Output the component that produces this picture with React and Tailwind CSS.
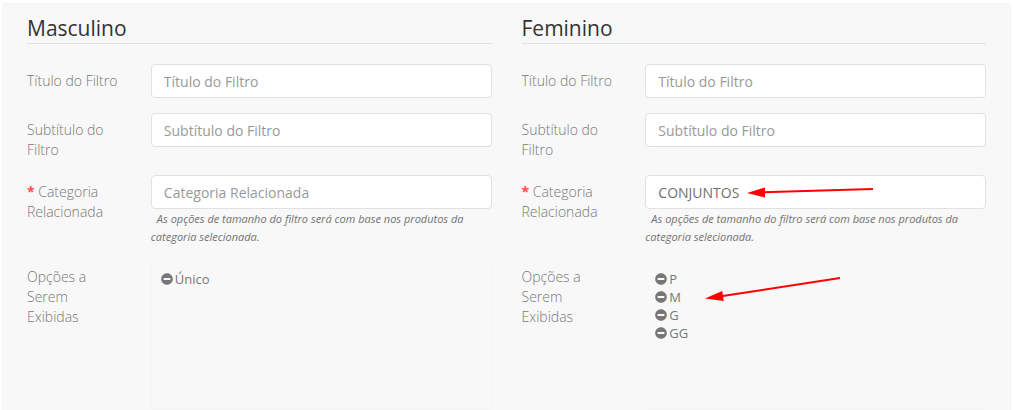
import { useState } from 'react'
import { FaMinusCircle } from 'react-icons/fa'

const HINT = 'As opções de tamanho do filtro será com base nos produtos da categoria selecionada.'

const fieldClass =
  'block h-[34px] w-full rounded border border-[#e1e1e1] bg-white px-3 pt-px text-sm text-[#6f6f6f] placeholder:text-[#999] focus:border-[#999] focus:outline-none'

function Row({ label, htmlFor, required, children }) {
  const Tag = htmlFor ? 'label' : 'div'
  return (
    <div className="mb-[15px] flex last:mb-0">
      <div className="w-4/15 shrink-0 pt-[7px] pr-[30px]">
        <Tag htmlFor={htmlFor} className="block text-sm leading-5 font-light text-[#777]">
          {required && <span className="font-bold text-[#ff4b4b]">* </span>}
          {label}
        </Tag>
      </div>
      <div className="relative min-w-0 flex-1">{children}</div>
    </div>
  )
}

function CategoryArrow() {
  return (
    <svg
      className="pointer-events-none absolute top-2.5 left-[102px]"
      width="130"
      height="16"
      viewBox="0 0 130 16"
      aria-hidden="true"
    >
      <path d="M16 7.3 126 4" stroke="#f00" strokeWidth="2" />
      <path d="M0 8 18 2.4V12.4Z" fill="#f00" />
    </svg>
  )
}

function OptionsArrow() {
  return (
    <svg
      className="pointer-events-none absolute top-4 left-[60px]"
      width="140"
      height="28"
      viewBox="0 0 140 28"
      aria-hidden="true"
    >
      <path d="M16 20.3 135 2" stroke="#f00" strokeWidth="2" />
      <path d="M0 22.5 17.3 15 18.7 25Z" fill="#f00" />
    </svg>
  )
}

function FilterSection({ id, title, initialCategory, initialOptions, arrows }) {
  const [category, setCategory] = useState(initialCategory)
  const [options, setOptions] = useState(initialOptions)

  function removeOption(name) {
    setOptions(options.filter((o) => o !== name))
  }

  return (
    <section>
      <h2 className="mb-5 border-b border-[#e1e1e1] text-[21px] leading-[30px] text-[#333]">{title}</h2>

      <Row label="Título do Filtro" htmlFor={`${id}-titulo`}>
        <input id={`${id}-titulo`} type="text" placeholder="Título do Filtro" className={fieldClass} />
      </Row>

      <Row label="Subtítulo do Filtro" htmlFor={`${id}-subtitulo`}>
        <input id={`${id}-subtitulo`} type="text" placeholder="Subtítulo do Filtro" className={fieldClass} />
      </Row>

      <Row label="Categoria Relacionada" htmlFor={`${id}-categoria`} required>
        <input
          id={`${id}-categoria`}
          type="text"
          required
          placeholder="Categoria Relacionada"
          value={category}
          onChange={(e) => setCategory(e.target.value)}
          aria-describedby={`${id}-hint`}
          className={`${fieldClass} shadow-none`}
        />
        <p id={`${id}-hint`} className="-mb-px pt-px indent-[6px] text-[11px] leading-[18px] text-[#737373] italic">
          {HINT}
        </p>
        {arrows && <CategoryArrow />}
      </Row>

      <Row label="Opções a Serem Exibidas">
        <ul className="h-[150px] overflow-y-auto rounded border border-[#f5f5f5] p-[9px] text-[13px] leading-[18px] text-[#777]">
          {options.map((name) => (
            <li key={name} className="flex items-center gap-0.5">
              <button type="button" aria-label={`Remover ${name}`} onClick={() => removeOption(name)}>
                <FaMinusCircle size={12} />
              </button>
              {name}
            </li>
          ))}
        </ul>
        {arrows && <OptionsArrow />}
      </Row>
    </section>
  )
}

export default function App() {
  return (
    <div className="bg-white px-0.5 pt-[3px] font-['Open_Sans',sans-serif]">
      <form className="grid grid-cols-1 gap-x-[30px] gap-y-6 rounded-t border border-b-0 border-[#f5f5f5] bg-[#f8f8f8] px-6 pt-[9px] sm:grid-cols-2">
        <FilterSection id="masculino" title="Masculino" initialCategory="" initialOptions={['Único']} />
        <FilterSection
          id="feminino"
          title="Feminino"
          initialCategory="CONJUNTOS"
          initialOptions={['P', 'M', 'G', 'GG']}
          arrows
        />
      </form>
    </div>
  )
}
